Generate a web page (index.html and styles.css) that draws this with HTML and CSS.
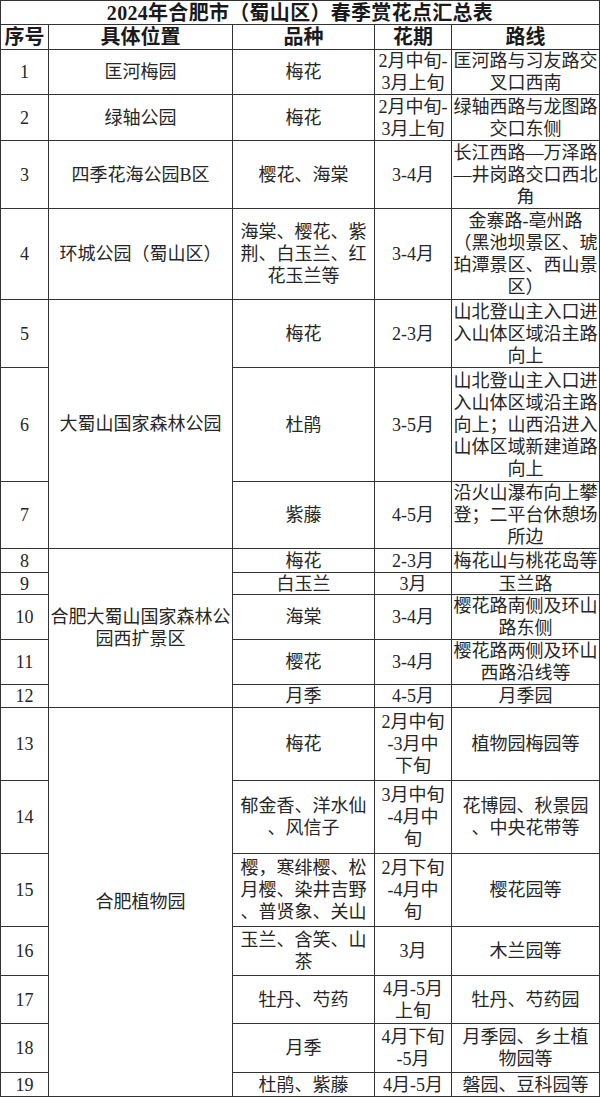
FILE: index.html
```html
<!DOCTYPE html>
<html lang="zh-CN">
<head>
<meta charset="utf-8">
<title>2024年合肥市（蜀山区）春季赏花点汇总表</title>
<link rel="stylesheet" href="styles.css">
</head>
<body>
<table class="sheet">
  <colgroup>
    <col class="c-no">
    <col class="c-loc">
    <col class="c-kind">
    <col class="c-date">
    <col class="c-route">
  </colgroup>
  <tr class="h24"><th class="title" colspan="5">2024年合肥市（蜀山区）春季赏花点汇总表</th></tr>
  <tr class="h25"><th>序号</th><th>具体位置</th><th>品种</th><th>花期</th><th>路线</th></tr>
  <tr class="h45"><td class="no">1</td><td>匡河梅园</td><td>梅花</td><td>2月中旬-<br>3月上旬</td><td>匡河路与习友路交<br>叉口西南</td></tr>
  <tr class="h46"><td class="no">2</td><td>绿轴公园</td><td>梅花</td><td>2月中旬-<br>3月上旬</td><td>绿轴西路与龙图路<br>交口东侧</td></tr>
  <tr class="h68"><td class="no">3</td><td>四季花海公园B区</td><td>樱花、海棠</td><td>3-4月</td><td>长江西路—万泽路<br>—井岗路交口西北<br>角</td></tr>
  <tr class="h91"><td class="no">4</td><td>环城公园（蜀山区）</td><td>海棠、樱花、紫<br>荆、白玉兰、红<br>花玉兰等</td><td>3-4月</td><td>金寨路-亳州路<br>（黑池坝景区、琥<br>珀潭景区、西山景<br>区）</td></tr>
  <tr class="h68"><td class="no">5</td><td rowspan="3">大蜀山国家森林公园</td><td>梅花</td><td>2-3月</td><td>山北登山主入口进<br>入山体区域沿主路<br>向上</td></tr>
  <tr class="h114"><td class="no">6</td><td>杜鹃</td><td>3-5月</td><td>山北登山主入口进<br>入山体区域沿主路<br>向上；山西沿进入<br>山体区域新建道路<br>向上</td></tr>
  <tr class="h67"><td class="no">7</td><td>紫藤</td><td>4-5月</td><td>沿火山瀑布向上攀<br>登；二平台休憩场<br>所边</td></tr>
  <tr class="h24"><td class="no">8</td><td rowspan="5">合肥大蜀山国家森林公<br>园西扩景区</td><td>梅花</td><td>2-3月</td><td>梅花山与桃花岛等</td></tr>
  <tr class="h22 tight"><td class="no">9</td><td>白玉兰</td><td>3月</td><td>玉兰路</td></tr>
  <tr class="h45"><td class="no">10</td><td>海棠</td><td>3-4月</td><td>樱花路南侧及环山<br>路东侧</td></tr>
  <tr class="h45"><td class="no">11</td><td>樱花</td><td>3-4月</td><td>樱花路两侧及环山<br>西路沿线等</td></tr>
  <tr class="h23 tight"><td class="no">12</td><td>月季</td><td>4-5月</td><td>月季园</td></tr>
  <tr class="h73"><td class="no">13</td><td rowspan="7">合肥植物园</td><td>梅花</td><td>2月中旬<br>-3月中<br>下旬</td><td>植物园梅园等</td></tr>
  <tr class="h73"><td class="no">14</td><td>郁金香、洋水仙<br>、风信子</td><td>3月中旬<br>-4月中<br>旬</td><td>花博园、秋景园<br>、中央花带等</td></tr>
  <tr class="h73"><td class="no">15</td><td>樱，寒绯樱、松<br>月樱、染井吉野<br>、普贤象、关山</td><td>2月下旬<br>-4月中<br>旬</td><td>樱花园等</td></tr>
  <tr class="h49"><td class="no">16</td><td>玉兰、含笑、山<br>茶</td><td>3月</td><td>木兰园等</td></tr>
  <tr class="h48"><td class="no">17</td><td>牡丹、芍药</td><td>4月-5月<br>上旬</td><td>牡丹、芍药园</td></tr>
  <tr class="h49"><td class="no">18</td><td>月季</td><td>4月下旬<br>-5月</td><td>月季园、乡土植<br>物园等</td></tr>
  <tr class="h24"><td class="no">19</td><td>杜鹃、紫藤</td><td>4月-5月</td><td>磐园、豆科园等</td></tr>
</table>
</body>
</html>
```
FILE: styles.css
```css
html, body {
  margin: 0;
  padding: 0;
  background: #ffffff;
}

.sheet {
  border-collapse: collapse;
  table-layout: fixed;
  width: 599px;
  font-family: "Liberation Serif", "Noto Sans CJK SC", serif;
  font-size: 18px;
  line-height: 22px;
  color: #262626;
}

.c-no { width: 48px; }
.c-loc { width: 184px; }
.c-kind { width: 142px; }
.c-date { width: 77px; }
.c-route { width: 148px; }

.sheet th,
.sheet td {
  border: 1px solid #333333;
  padding: 0;
  text-align: center;
  vertical-align: middle;
  white-space: nowrap;
  overflow: hidden;
}

.sheet th {
  font-size: 20px;
  font-weight: bold;
  color: #1a1a1a;
  line-height: 22px;
}

.sheet .title {
  letter-spacing: 0.3px;
}

.sheet .no {
  font-size: 18px;
}

.sheet .tight td {
  line-height: 20px;
}

.h22 { height: 22px; }
.h23 { height: 23px; }
.h24 { height: 24px; }
.h25 { height: 25px; }
.h45 { height: 45px; }
.h46 { height: 46px; }
.h48 { height: 48px; }
.h49 { height: 49px; }
.h67 { height: 67px; }
.h68 { height: 68px; }
.h73 { height: 73px; }
.h91 { height: 91px; }
.h114 { height: 114px; }
```
